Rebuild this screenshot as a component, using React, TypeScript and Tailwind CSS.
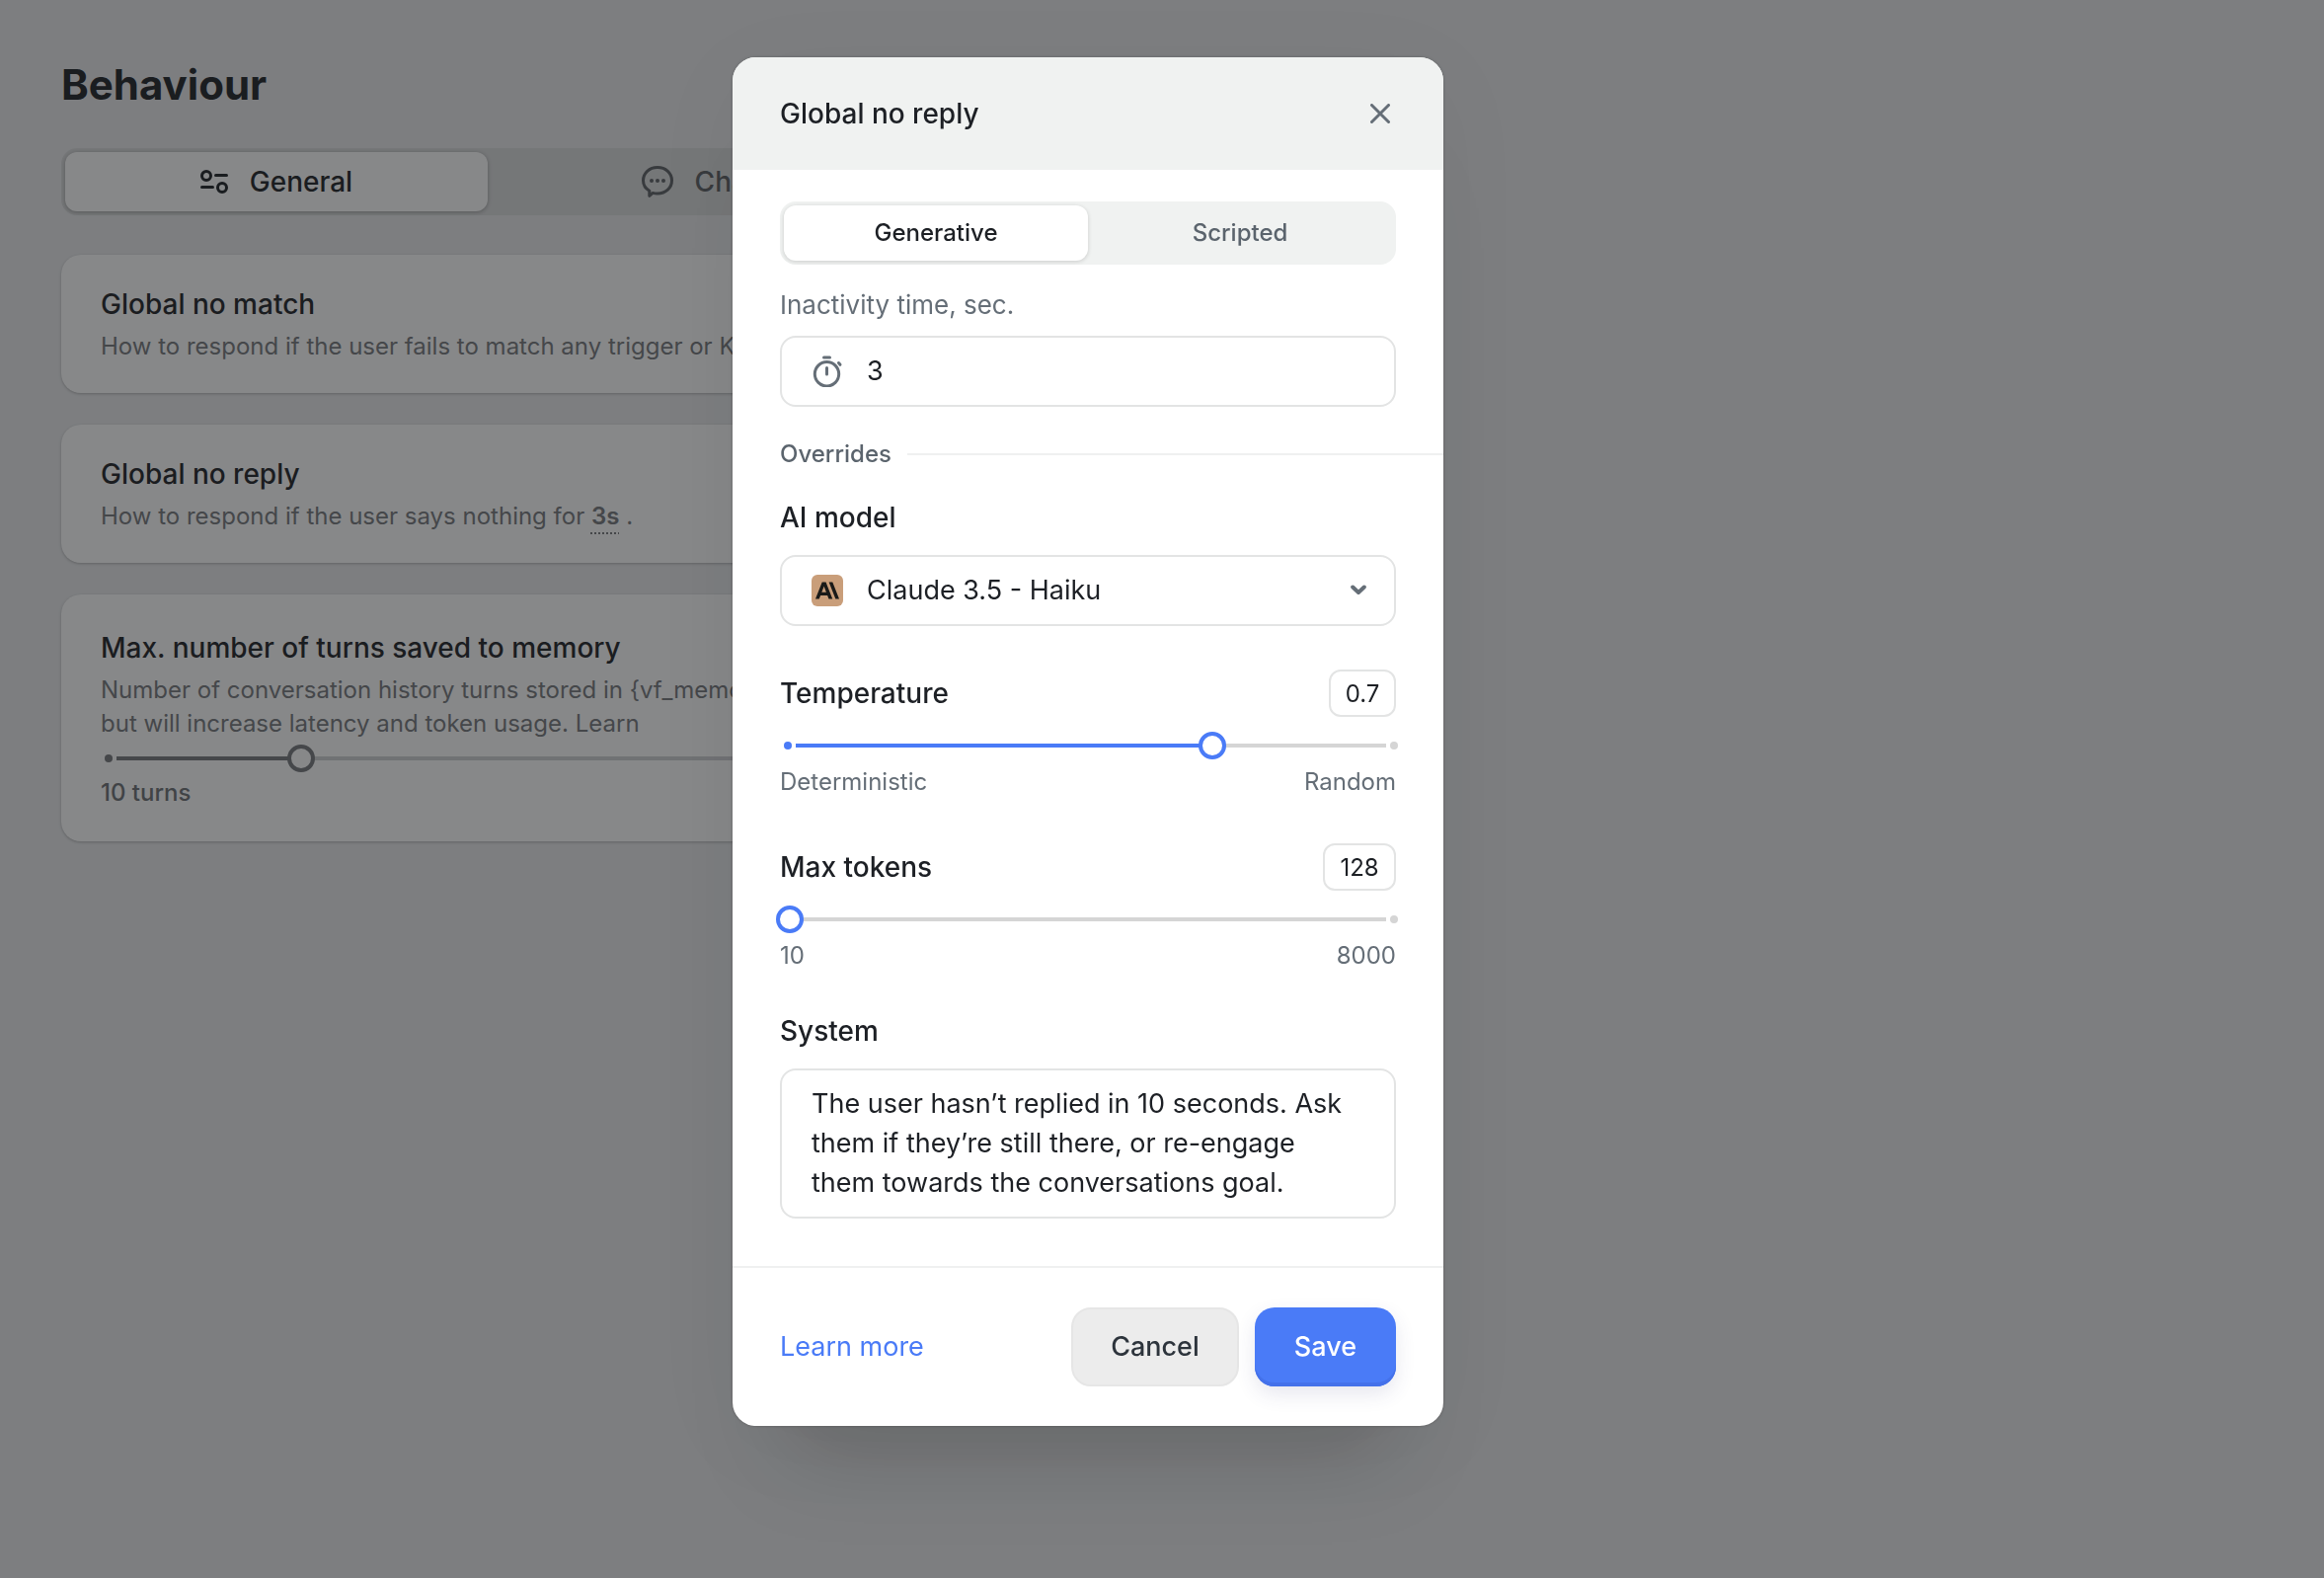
import { useState } from 'react'
import type { ReactNode } from 'react'
import { SiAnthropic } from 'react-icons/si'

function SettingsIcon() {
  return (
    <svg className="h-7 w-7" viewBox="0 0 28 28" fill="none" stroke="currentColor" strokeWidth="3" strokeLinecap="round">
      <circle cx="6" cy="8" r="4.5" />
      <path d="M15.5 7.5h11M1.5 19.5h11" />
      <circle cx="22" cy="20" r="4.5" />
    </svg>
  )
}

function ChatIcon() {
  return (
    <svg className="h-8 w-8" viewBox="0 0 32 32" fill="none" stroke="currentColor" strokeWidth="3" strokeLinejoin="round">
      <path d="M16 1.5c8.3 0 14.5 5.800 14.5 13.200S24.3 28 16 28c-1.900 0-3.400-.2-4.800-.6L7.800 30.300V25.200C3.900 22.900 1.5 19.100 1.5 14.700 1.5 7.300 7.700 1.5 16 1.5Z" />
      <g fill="currentColor" stroke="none">
        <circle cx="10" cy="15" r="2" />
        <circle cx="16" cy="15" r="2" />
        <circle cx="22" cy="15" r="2" />
      </g>
    </svg>
  )
}

function TimerIcon() {
  return (
    <svg className="h-8 w-8" viewBox="0 0 32 32" fill="none" stroke="currentColor" strokeWidth="3" strokeLinecap="round">
      <circle cx="15.5" cy="18.8" r="12.2" />
      <path d="M12.5 2h6M15.5 12.5v6.5M27.5 7.5l1.5 1.8" />
    </svg>
  )
}

function CloseIcon() {
  return (
    <svg className="h-5 w-5" viewBox="0 0 20 20" fill="none" stroke="currentColor" strokeWidth="3" strokeLinecap="round">
      <path d="M1.5 1.5l17 17M18.5 1.5l-17 17" />
    </svg>
  )
}

function ChevronIcon() {
  return (
    <svg className="h-3 w-4" viewBox="0 0 16 12" fill="none" stroke="currentColor" strokeWidth="4" strokeLinecap="round" strokeLinejoin="round">
      <path d="M2.2 2.5L8 8l5.8-5.5" />
    </svg>
  )
}

type SliderProps = {
  label: string
  min: number
  max: number
  step: number
  value: number
  muted?: boolean
  onChange: (value: number) => void
}

function Slider({ label, min, max, step, value, muted, onChange }: SliderProps) {
  const snapped = Math.round((value - min) / step) * step
  const fill = (snapped / (max - min)) * 100
  const on = muted ? 'bg-[#75787c]' : 'bg-[#4a7bf7]'
  const off = muted ? 'bg-[#d0d1d4]' : 'bg-[#d5d5d5]'
  const thumb = muted ? '[&::-webkit-slider-thumb]:border-[#75787c]' : '[&::-webkit-slider-thumb]:border-[#4a7bf7]'

  return (
    <div className="relative flex h-7 items-center gap-1">
      <span className={`ml-1 h-2 w-2 rounded-full ${on}`} />
      <span className={`h-1 flex-1 ${off}`}>
        <span className={`block h-1 ${on}`} style={{ width: `${fill}%` }} />
      </span>
      <span className={`-mr-0.5 h-2 w-2 rounded-full ${off}`} />
      <input
        type="range"
        aria-label={label}
        min={min}
        max={max}
        step={step}
        value={value}
        onChange={(e) => onChange(Number(e.target.value))}
        className={`absolute inset-y-0 -left-1 -right-3 appearance-none bg-transparent [&::-webkit-slider-thumb]:h-7 [&::-webkit-slider-thumb]:w-7 [&::-webkit-slider-thumb]:appearance-none [&::-webkit-slider-thumb]:rounded-full [&::-webkit-slider-thumb]:border-4 [&::-webkit-slider-thumb]:bg-white ${thumb}`}
      />
    </div>
  )
}

function Card({ title, className = 'py-8', children }: { title: string; className?: string; children: ReactNode }) {
  return (
    <section className={`rounded-[20px] bg-white px-10 shadow-[0_1px_3px_rgba(0,0,0,0.25)] ${className}`}>
      <h2 className="text-[28px] leading-9 font-medium">{title}</h2>
      <div className="mt-2 text-2xl leading-[34px] text-[#75787c]">{children}</div>
    </section>
  )
}

function BehaviourPage() {
  const [turns, setTurns] = useState(10)

  return (
    <main className="px-[62px] pt-14">
      <div className="w-full max-w-[864px]">
        <h1 className="text-[42px] leading-[60px] font-bold">Behaviour</h1>
        <div className="mt-[34px] grid grid-cols-2 rounded-2xl bg-[#dadbdc] p-1">
          <button className="flex h-[60px] items-center justify-center gap-[22px] rounded-xl bg-white text-[28px] font-medium shadow-[0_1px_4px_rgba(0,0,0,0.3)]">
            <SettingsIcon />
            General
          </button>
          <button className="flex h-[60px] items-center justify-center gap-[22px] text-[28px] font-medium text-[#5b5e62]">
            <ChatIcon />
            Chat
          </button>
        </div>

        <div className="mt-10 flex flex-col gap-8">
          <Card title="Global no match" className="pt-8 pb-[30px]">
            <p className="whitespace-nowrap">How to respond if the user fails to match any trigger or KB.</p>
          </Card>
          <Card title="Global no reply" className="pt-8 pb-[30px]">
            <p>
              How to respond if the user says nothing for{' '}
              <span className="font-semibold underline decoration-dotted decoration-2 underline-offset-8">3s</span> .
            </p>
          </Card>
          <Card title="Max. number of turns saved to memory" className="pt-9 pb-8">
            <p>
              Number of conversation history turns stored in {'{vf_memory}'}
              <br />
              but will increase latency and token usage. Learn
            </p>
            <div className="mt-1">
              <Slider label="Turns saved to memory" min={0} max={40} step={1} value={turns} muted onChange={setTurns} />
            </div>
            <p className="mt-1 font-medium text-[#6c6f73]">{turns} turns</p>
          </Card>
        </div>
      </div>
    </main>
  )
}

function NoReplyDialog() {
  const [temperature, setTemperature] = useState(0.7)
  const [tokens, setTokens] = useState(128)

  return (
    <div
      role="dialog"
      aria-labelledby="dialog-title"
      className="w-full max-w-[720px] overflow-hidden rounded-3xl bg-white shadow-[0_0_3px_rgba(0,0,0,0.25),0_16px_100px_rgba(0,0,0,0.04),0_80px_90px_-50px_rgba(0,0,0,0.16)]"
    >
      <header className="flex h-[114px] items-center justify-between bg-[#f0f2f1] px-12">
        <h2 id="dialog-title" className="text-[28px] font-medium">Global no reply</h2>
        <button aria-label="Close" className="p-1.5 text-[#656e77]">
          <CloseIcon />
        </button>
      </header>

      <div className="px-12 pt-8 pb-12">
        <div className="grid grid-cols-2 rounded-2xl bg-[#f0f2f1] p-1 text-2xl font-medium">
          <button className="h-14 rounded-xl bg-white shadow-[0_1px_4px_rgba(0,0,0,0.16)]">Generative</button>
          <button className="h-14 text-[#5b646d]">Scripted</button>
        </div>

        <label htmlFor="inactivity" className="mt-6 block text-[26px] leading-[34px] text-[#656e77]">
          Inactivity time, sec.
        </label>
        <div className="mt-3.5 flex h-[72px] items-center gap-6 rounded-2xl border-2 border-[#e3e4e4] px-[30px]">
          <span className="text-[#656e77]">
            <TimerIcon />
          </span>
          <input id="inactivity" defaultValue="3" className="min-w-0 flex-1 text-[27px] outline-none" />
        </div>

        <div className="-mr-12 mt-8 flex items-center gap-4">
          <h3 className="text-2xl leading-8 font-medium text-[#5b646d]">Overrides</h3>
          <span className="h-0.5 flex-1 bg-[#eff0f0]" />
        </div>

        <label htmlFor="model" className="mt-[30px] block text-[28px] leading-9 font-medium">AI model</label>
        <div className="relative mt-5">
          <select id="model" className="h-[72px] w-full appearance-none rounded-2xl border-2 border-[#e3e4e4] pl-[86px] text-[27px] outline-none">
            <option>Claude 3.5 - Haiku</option>
          </select>
          <span className="pointer-events-none absolute inset-y-0 left-8 flex items-center">
            <span className="flex h-8 w-8 items-center justify-center rounded-md bg-[#c99e7a]">
              <SiAnthropic className="h-6 w-6 text-[#1a1a18]" />
            </span>
          </span>
          <span className="pointer-events-none absolute inset-y-0 right-[30px] flex items-center text-[#656e77]">
            <ChevronIcon />
          </span>
        </div>

        <div className="mt-11 flex items-center justify-between">
          <label htmlFor="temperature" className="text-[28px] leading-9 font-medium">Temperature</label>
          <input
            id="temperature"
            value={temperature}
            onChange={(e) => setTemperature(Number(e.target.value))}
            className="h-12 w-[68px] rounded-xl border-2 border-[#e3e4e4] text-center text-2xl outline-none"
          />
        </div>
        <div className="mt-[15px]">
          <Slider label="Temperature" min={0} max={1} step={0.1} value={temperature} onChange={setTemperature} />
        </div>
        <div className="mt-[7px] flex justify-between text-2xl leading-8 text-[#656e77]">
          <span>Deterministic</span>
          <span>Random</span>
        </div>

        <div className="mt-[46px] flex items-center justify-between">
          <label htmlFor="tokens" className="text-[28px] leading-9 font-medium">Max tokens</label>
          <input
            id="tokens"
            value={tokens}
            onChange={(e) => setTokens(Number(e.target.value))}
            className="h-12 w-[74px] rounded-xl border-2 border-[#e3e4e4] text-center text-2xl outline-none"
          />
        </div>
        <div className="mt-[15px]">
          <Slider label="Max tokens" min={10} max={8000} step={250} value={tokens} onChange={setTokens} />
        </div>
        <div className="mt-[7px] flex justify-between text-2xl leading-8 text-[#656e77]">
          <span>10</span>
          <span>8000</span>
        </div>

        <label htmlFor="system" className="mt-[42px] block text-[28px] leading-9 font-medium">System</label>
        <textarea
          id="system"
          rows={3}
          defaultValue="The user hasn’t replied in 10 seconds. Ask them if they’re still there, or re-engage them towards the conversations goal."
          className="mt-5 block w-full resize-none overflow-hidden rounded-2xl border-2 border-[#e3e4e4] px-[30px] py-3.5 text-[27px] leading-10 outline-none"
        />
      </div>

      <footer className="flex items-center gap-4 border-t-2 border-[#eff0f0] px-12 py-10 text-[27px]">
        <a href="#" className="mr-auto text-[#4a7bf7]">Learn more</a>
        <button className="h-20 rounded-[20px] border-2 border-[#e6e6e6] bg-[#ececec] px-[38px] font-medium text-[#2d343c]">
          Cancel
        </button>
        <button className="h-20 rounded-[20px] bg-[#4a7bf7] px-10 font-medium text-white shadow-[inset_0_-4px_0_#4471ea,0_8px_20px_rgba(60,60,120,0.12)]">
          Save
        </button>
      </footer>
    </div>
  )
}

export default function App() {
  return (
    <div className="min-h-screen bg-[#eaebed] font-[Inter,sans-serif] text-[#1d2025]">
      <BehaviourPage />
      <div className="fixed inset-0 flex items-start justify-center overflow-auto bg-[#191a1c]/52 pt-[58px] pr-[150px]">
        <NoReplyDialog />
      </div>
    </div>
  )
}
